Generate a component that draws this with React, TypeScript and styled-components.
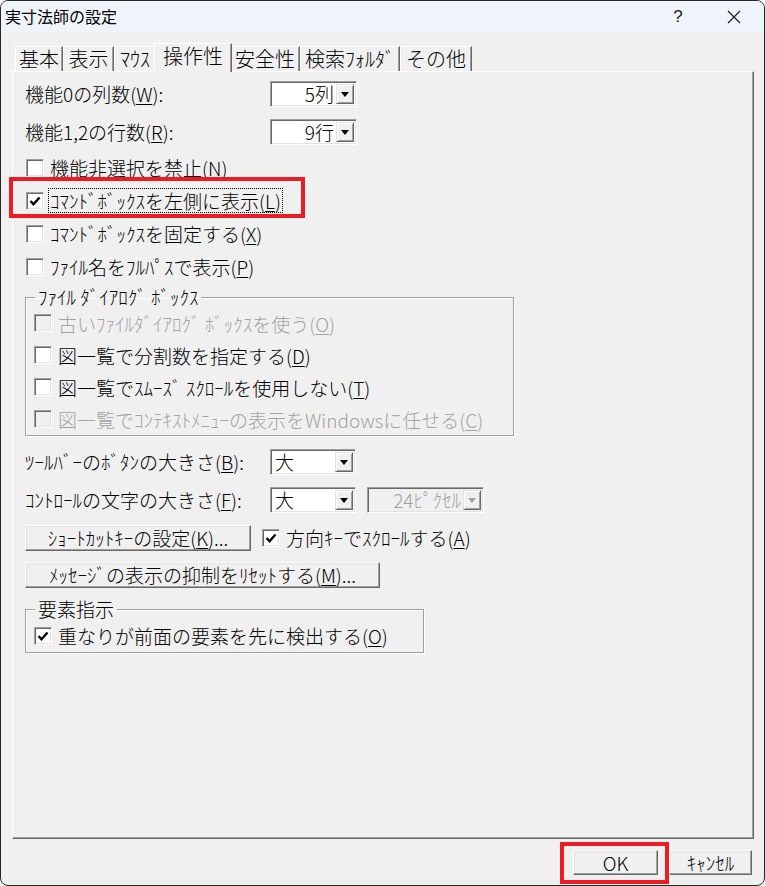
import React from "react";
import styled, { createGlobalStyle, css } from "styled-components";

const FONT = `"Noto Sans CJK JP", "Noto Sans CJK SC", "Noto Sans", sans-serif`;

const GlobalStyle = createGlobalStyle`
  html, body { margin: 0; padding: 0; background: #ffffff; }
  body { font-family: ${FONT}; }
  *, *::before, *::after { box-sizing: border-box; }
`;

const Window = styled.div`
  width: 765px;
  height: 886px;
  border: 1px solid #262626;
  border-radius: 8px;
  overflow: hidden;
  background: #f0f0f0;
  display: flex;
  flex-direction: column;
  font-family: ${FONT};
  font-weight: 300;
  color: #000;
  white-space: nowrap;
`;

const TitleBar = styled.div`
  height: 31px;
  flex: none;
  background: #eef4f9;
  display: flex;
  align-items: center;
  padding-left: 4px;
`;

const Title = styled.div`
  flex: 1;
  font-size: 16px;
  line-height: 20px;
  font-weight: 400;
  margin-top: -1px;
`;

const CaptionButton = styled.div<{ $mr?: number }>`
  width: 56px;
  height: 31px;
  margin-right: ${(p) => p.$mr ?? 0}px;
  display: flex;
  align-items: center;
  justify-content: center;
  font-family: "Liberation Sans", "DejaVu Sans", sans-serif;
  font-size: 17px;
  font-weight: 400;
  color: #1a1a1a;
`;

const Body = styled.div`
  flex: 1;
  display: flex;
  flex-direction: column;
  padding: 11px 10px 0 11px;
`;

const TabStrip = styled.div`
  display: flex;
  align-items: flex-end;
  height: 29px;
  margin-bottom: -1px;
  padding-left: 3px;
  position: relative;
  z-index: 1;
`;

const Tab = styled.div<{ $active?: boolean; $w: number }>`
  width: ${(p) => p.$w}px;
  height: ${(p) => (p.$active ? 29 : 25)}px;
  margin-bottom: ${(p) => (p.$active ? 0 : 1)}px;
  padding-bottom: ${(p) => (p.$active ? 4 : 0)}px;
  text-align: center;
  font-size: 20px;
  line-height: 24px;
  background: #f0f0f0;
  border-left: 1px solid #ffffff;
  border-top: 1px solid #ffffff;
  border-right: 1px solid #696969;
  box-shadow: inset -1px 0 0 #a0a0a0;
  flex: none;
  ${(p) =>
    p.$active &&
    css`
      margin-left: -2px;
      margin-right: -2px;
      position: relative;
      z-index: 1;
    `}
`;

const Panel = styled.div`
  flex: 1;
  display: flex;
  flex-direction: column;
  padding: 3px 12px 0 12px;
  border-top: 1px solid #ffffff;
  border-left: 1px solid #ffffff;
  border-right: 1px solid #696969;
  border-bottom: 1px solid #696969;
  box-shadow: inset -1px -1px 0 #a0a0a0;
`;

const Row = styled.div<{ $h: number; $mt?: number }>`
  height: ${(p) => p.$h}px;
  margin-top: ${(p) => p.$mt ?? 0}px;
  display: flex;
  align-items: center;
  flex: none;
`;

const FieldLabel = styled.div`
  width: 245px;
  font-size: 19px;
  line-height: 22px;
`;

const Key = styled.span`
  text-decoration: underline;
  text-underline-offset: 2px;
  text-decoration-thickness: 1px;
`;

const ComboBox = styled.div<{ $w: number; $disabled?: boolean; $ml?: number }>`
  width: ${(p) => p.$w}px;
  height: 26px;
  margin-left: ${(p) => p.$ml ?? 0}px;
  display: flex;
  padding: 2px;
  background: ${(p) => (p.$disabled ? "#f0f0f0" : "#ffffff")};
  border: 1px solid;
  border-color: #a0a0a0 #ffffff #ffffff #a0a0a0;
  box-shadow: inset 1px 1px 0 #696969, inset -1px -1px 0 #e3e3e3;
`;

const ComboValue = styled.div<{ $right?: boolean; $disabled?: boolean }>`
  flex: 1;
  font-size: 19px;
  line-height: 20px;
  padding: 0 2px;
  text-align: ${(p) => (p.$right ? "right" : "left")};
  color: ${(p) => (p.$disabled ? "#a0a0a0" : "#000")};
`;

const ComboArrow = styled.div<{ $disabled?: boolean }>`
  width: 18px;
  height: 100%;
  background: #f0f0f0;
  border: 1px solid;
  border-color: #e3e3e3 #696969 #696969 #e3e3e3;
  box-shadow: inset 1px 1px 0 #ffffff, inset -1px -1px 0 #a0a0a0;
  display: flex;
  align-items: center;
  justify-content: center;
  &::after {
    content: "";
    width: 0;
    height: 0;
    margin-top: 1px;
    border-left: 4.5px solid transparent;
    border-right: 4.5px solid transparent;
    border-top: 5px solid ${(p) => (p.$disabled ? "#a0a0a0" : "#000")};
  }
`;

const CheckRow = styled.div<{ $h: number; $highlight?: boolean; $ml?: number }>`
  height: ${(p) => p.$h}px;
  display: flex;
  align-items: center;
  gap: 4px;
  flex: none;
  margin-left: ${(p) => p.$ml ?? 1}px;
  position: relative;
  ${(p) =>
    p.$highlight &&
    css`
      &::after {
        content: "";
        position: absolute;
        left: -17px;
        top: -7px;
        width: 296px;
        height: 41px;
        border: 4px solid #ed1c24;
        pointer-events: none;
      }
    `}
`;

const Box = styled.span<{ $disabled?: boolean }>`
  width: 18px;
  height: 18px;
  flex: none;
  display: flex;
  align-items: center;
  justify-content: center;
  background: ${(p) => (p.$disabled ? "#f0f0f0" : "#ffffff")};
  border: 1px solid;
  border-color: #a0a0a0 #ffffff #ffffff #a0a0a0;
  box-shadow: inset 1px 1px 0 #696969, inset -1px -1px 0 #e3e3e3;
`;

const CheckText = styled.span<{ $disabled?: boolean; $focus?: boolean }>`
  font-size: 19px;
  line-height: 23px;
  padding: 0 1px;
  border: 1px ${(p) => (p.$focus ? "dotted #000" : "solid transparent")};
  color: ${(p) => (p.$disabled ? "#a3a3a3" : "#000")};
`;

const Group = styled.fieldset<{ $w: number; $mt: number }>`
  width: ${(p) => p.$w}px;
  margin: ${(p) => p.$mt}px 0 0 0;
  padding: 0 8px 0 7px;
  border: 1px solid #a0a0a0;
  box-shadow: 1px 1px 0 #ffffff, inset 1px 1px 0 #ffffff;
  min-width: 0;
  flex: none;
`;

const Legend = styled.legend`
  font-size: 19px;
  line-height: 20px;
  padding: 0 3px;
  margin-left: 2px;
`;

const PushButton = styled.div<{ $w: number }>`
  width: ${(p) => p.$w}px;
  height: 26px;
  flex: none;
  display: flex;
  align-items: center;
  justify-content: center;
  font-size: 19px;
  line-height: 22px;
  background: #f0f0f0;
  border: 1px solid;
  border-color: #ffffff #696969 #696969 #ffffff;
  box-shadow: inset -1px -1px 0 #a0a0a0, inset 1px 1px 0 #e3e3e3;
`;

const Footer = styled.div`
  height: 46px;
  flex: none;
  display: flex;
  justify-content: flex-end;
  align-items: flex-start;
  gap: 11px;
  padding: 11px 2px 0 0;
`;

const DialogButton = styled(PushButton)<{ $highlight?: boolean }>`
  height: 25px;
  position: relative;
  ${(p) =>
    p.$highlight &&
    css`
      &::after {
        content: "";
        position: absolute;
        left: -14px;
        top: -9px;
        right: -12px;
        bottom: -10px;
        border: 4px solid #ed1c24;
        pointer-events: none;
      }
    `}
`;

const Check = () => (
  <svg width="12" height="12" viewBox="0 0 12 12">
    <path d="M1.5 6 L4.5 9.2 L10.5 2.5" fill="none" stroke="#000" strokeWidth="2.4" />
  </svg>
);

const CloseIcon = () => (
  <svg width="14" height="14" viewBox="0 0 14 14">
    <path d="M1 1 L13 13 M13 1 L1 13" stroke="#1a1a1a" strokeWidth="1.1" fill="none" />
  </svg>
);

type Lbl = [string, string, string];
const L = ({ t }: { t: Lbl }) => (
  <>
    {t[0]}
    <Key>{t[1]}</Key>
    {t[2]}
  </>
);

const CheckItem = ({
  t,
  checked,
  disabled,
  focus,
  highlight,
  h,
  ml,
}: {
  t: Lbl;
  checked?: boolean;
  disabled?: boolean;
  focus?: boolean;
  highlight?: boolean;
  h: number;
  ml?: number;
}) => (
  <CheckRow $h={h} $highlight={highlight} $ml={ml}>
    <Box $disabled={disabled}>{checked && <Check />}</Box>
    <CheckText $disabled={disabled} $focus={focus}>
      <L t={t} />
    </CheckText>
  </CheckRow>
);

const Combo = ({
  value,
  w,
  right,
  disabled,
  ml,
}: {
  value: string;
  w: number;
  right?: boolean;
  disabled?: boolean;
  ml?: number;
}) => (
  <ComboBox $w={w} $disabled={disabled} $ml={ml}>
    <ComboValue $right={right} $disabled={disabled}>
      {value}
    </ComboValue>
    <ComboArrow $disabled={disabled} />
  </ComboBox>
);

const tabs: { label: string; w: number; active?: boolean }[] = [
  { label: "基本", w: 48 },
  { label: "表示", w: 51 },
  { label: "ﾏｳｽ", w: 42 },
  { label: "操作性", w: 78, active: true },
  { label: "安全性", w: 70 },
  { label: "検索ﾌｫﾙﾀﾞ", w: 100 },
  { label: "その他", w: 72 },
];

export default function App() {
  return (
    <>
      <GlobalStyle />
      <Window>
        <TitleBar>
          <Title>実寸法師の設定</Title>
          <CaptionButton>?</CaptionButton>
          <CaptionButton $mr={2}>
            <CloseIcon />
          </CaptionButton>
        </TitleBar>
        <Body>
          <TabStrip>
            {tabs.map((t) => (
              <Tab key={t.label} $active={t.active} $w={t.w}>
                {t.label}
              </Tab>
            ))}
          </TabStrip>
          <Panel>
            <Row $h={38}>
              <FieldLabel>
                <L t={["機能0の列数(", "W", "):"]} />
              </FieldLabel>
              <Combo value="5列" w={87} right />
            </Row>
            <Row $h={38}>
              <FieldLabel>
                <L t={["機能1,2の行数(", "R", "):"]} />
              </FieldLabel>
              <Combo value="9行" w={87} right />
            </Row>
            <CheckItem h={33} t={["機能非選択を禁止(", "N", ")"]} />
            <CheckItem h={33} t={["ｺﾏﾝﾄﾞﾎﾞｯｸｽを左側に表示(", "L", ")"]} checked focus highlight />
            <CheckItem h={33} t={["ｺﾏﾝﾄﾞﾎﾞｯｸｽを固定する(", "X", ")"]} />
            <CheckItem h={33} t={["ﾌｧｲﾙ名をﾌﾙﾊﾟｽで表示(", "P", ")"]} />

            <Group $w={489} $mt={4}>
              <Legend>ﾌｧｲﾙ ﾀﾞｲｱﾛｸﾞ ﾎﾞｯｸｽ</Legend>
              <CheckItem h={32} t={["古いﾌｧｲﾙﾀﾞｲｱﾛｸﾞ ﾎﾞｯｸｽを使う(", "O", ")"]} disabled />
              <CheckItem h={32} t={["図一覧で分割数を指定する(", "D", ")"]} />
              <CheckItem h={32} t={["図一覧でｽﾑｰｽﾞ ｽｸﾛｰﾙを使用しない(", "T", ")"]} />
              <CheckItem
                h={32}
                t={["図一覧でｺﾝﾃｷｽﾄﾒﾆｭｰの表示をWindowsに任せる(", "C", ")"]}
                disabled
              />
            </Group>

            <Row $h={38} $mt={7}>
              <FieldLabel>
                <L t={["ﾂｰﾙﾊﾞｰのﾎﾞﾀﾝの大きさ(", "B", "):"]} />
              </FieldLabel>
              <Combo value="大" w={86} />
            </Row>
            <Row $h={38}>
              <FieldLabel>
                <L t={["ｺﾝﾄﾛｰﾙの文字の大きさ(", "F", "):"]} />
              </FieldLabel>
              <Combo value="大" w={86} />
              <Combo value="24ﾋﾟｸｾﾙ" w={117} right disabled ml={11} />
            </Row>
            <Row $h={37}>
              <PushButton $w={226}>
                <L t={["ｼｮｰﾄｶｯﾄｷｰの設定(", "K", ")..."]} />
              </PushButton>
              <CheckItem h={37} ml={11} t={["方向ｷｰでｽｸﾛｰﾙする(", "A", ")"]} checked />
            </Row>
            <Row $h={37}>
              <PushButton $w={355}>
                <L t={["ﾒｯｾｰｼﾞの表示の抑制をﾘｾｯﾄする(", "M", ")..."]} />
              </PushButton>
            </Row>

            <Group $w={399} $mt={6}>
              <Legend>要素指示</Legend>
              <CheckItem h={33} t={["重なりが前面の要素を先に検出する(", "O", ")"]} checked />
            </Group>
          </Panel>
          <Footer>
            <DialogButton $w={85} $highlight>
              OK
            </DialogButton>
            <DialogButton $w={83}>ｷｬﾝｾﾙ</DialogButton>
          </Footer>
        </Body>
      </Window>
    </>
  );
}
